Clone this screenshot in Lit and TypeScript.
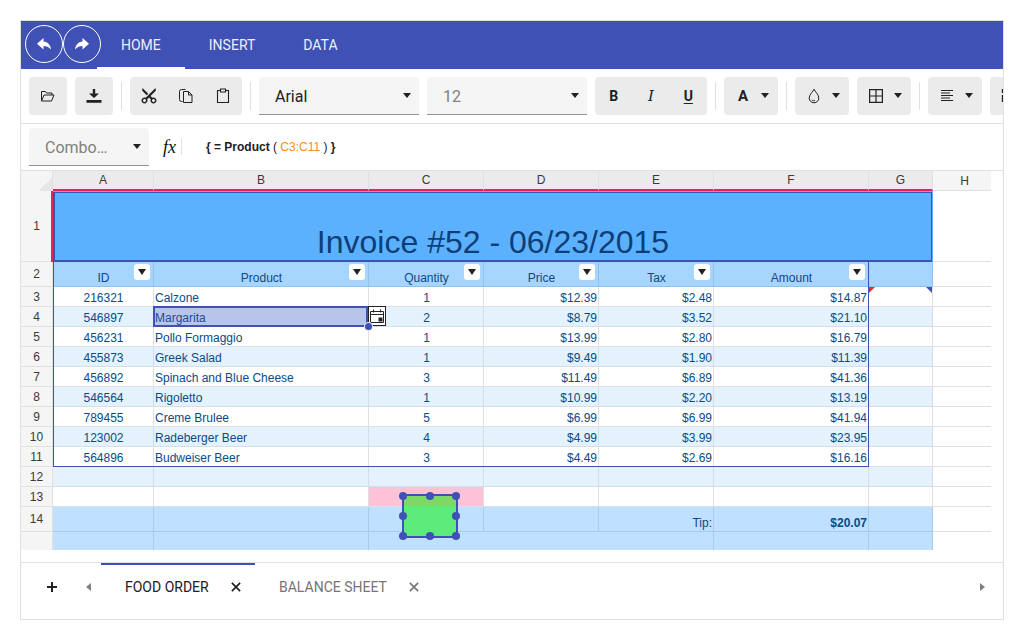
import { LitElement, html, css, svg } from 'lit';
import { customElement } from 'lit/decorators.js';

const icon = (body: unknown, size = 16, vb = 24) => html`<svg width=${size} height=${size} viewBox="0 0 ${vb} ${vb}">${body}</svg>`;

const ICONS = {
  undo: svg`<path fill="currentColor" d="M7.500 2 1 7.800l6.500 5.700V10c3 0 5.300 1 7.500 3.500C14.500 9 12 5.800 7.500 5.400z"/>`,
  redo: svg`<path fill="currentColor" d="M8.500 2 15 7.800l-6.500 5.700V10c-3 0-5.300 1-7.500 3.500C1.500 9 4 5.800 8.500 5.400z"/>`,
  open: svg`<path fill="none" stroke="currentColor" stroke-width="1" d="M1.500 13v-9.500h4l1 1.500h5.500v2M1.500 13h10l2.500-6H4z"/>`,
  save: svg`<path fill="currentColor" d="M6.800 1h2.400v4.500H13L8 10 3 5.500h3.800zM.5 12h15v2.700H.5z"/>`,
  cut: svg`<path transform="rotate(-90 12 12)" fill="currentColor" d="M9.640 7.640c.23-.5.36-1.050.36-1.640 0-2.210-1.790-4-4-4S2 3.790 2 6s1.790 4 4 4c.59 0 1.140-.13 1.640-.36L10 12l-2.360 2.360C7.140 14.130 6.590 14 6 14c-2.210 0-4 1.790-4 4s1.790 4 4 4 4-1.790 4-4c0-.59-.13-1.140-.36-1.640L12 14l7 7h3v-1L9.640 7.640zM6 8c-1.100 0-2-.89-2-2s.9-2 2-2 2 .89 2 2-.9 2-2 2zm0 12c-1.100 0-2-.89-2-2s.9-2 2-2 2 .89 2 2-.9 2-2 2zM19 3l-6 6 2 2 7-7V3z"/>`,
  copy: svg`<path fill="none" stroke="currentColor" stroke-width="1" d="M4.500 13.500h-1a2 2 0 0 1-2-2v-8a2 2 0 0 1 2-2h4M5.500 3.500h5l3.500 3.500v7.500H5.500zM10.500 3.500V7H14"/>`,
  paste: svg`<path fill="none" stroke="currentColor" stroke-width="1.100" d="M5.500 2.500H2.500v12h11v-12h-3M5.500 1h5v3h-5z"/>`,
  drop: svg`<path fill="none" stroke="currentColor" stroke-width="1" d="M8 1.200c-1 2.500-4.800 5.300-4.800 8.900a4.800 4.700 0 0 0 9.600 0c0-3.600-3.800-6.400-4.800-8.900zM5.800 11.800c.8 1 2.200 1.300 3.200.7"/>`,
  borders: svg`<path fill="none" stroke="currentColor" stroke-width="1.200" d="M1.600 1.600h12.800v12.800H1.600zM8 1.600v12.800M1.600 8h12.800"/>`,
  align: svg`<path fill="currentColor" d="M2 2h12v1H2zM2 4.500h9v1H2zM2 7h12v1H2zM2 9.500h9v1H2zM2 12h12v1H2z"/>`,
  merge: svg`<path fill="currentColor" d="M.8 1h1.400v4H.8zM.8 7h1.400v7H.8z"/>`,
  plus: svg`<path fill="currentColor" d="M7 3h2v4h4v2H9v4H7V9H3V7h4z"/>`,
  close: svg`<path fill="none" stroke="currentColor" stroke-width="2.200" d="M2.500 2.500l11 11M13.500 2.500l-11 11"/>`,
  calendar: svg`<path fill="none" stroke="#222" stroke-width="1" d="M1.500 3.500h13v11h-13zM1.500 6.500h13M4.500 1.500v3M11.500 1.500v3"/><path fill="#222" d="M9.500 9.500h4v4h-4z"/>`,
};

const COLS = ['A', 'B', 'C', 'D', 'E', 'F', 'G', 'H'];
const FILTERS = ['ID', 'Product', 'Quantity', 'Price', 'Tax', 'Amount'];
const ORDERS = [
  ['216321', 'Calzone', '1', '$12.39', '$2.48', '$14.87'],
  ['546897', 'Margarita', '2', '$8.79', '$3.52', '$21.10'],
  ['456231', 'Pollo Formaggio', '1', '$13.99', '$2.80', '$16.79'],
  ['455873', 'Greek Salad', '1', '$9.49', '$1.90', '$11.39'],
  ['456892', 'Spinach and Blue Cheese', '3', '$11.49', '$6.89', '$41.36'],
  ['546564', 'Rigoletto', '1', '$10.99', '$2.20', '$13.19'],
  ['789455', 'Creme Brulee', '5', '$6.99', '$6.99', '$41.94'],
  ['123002', 'Radeberger Beer', '4', '$4.99', '$3.99', '$23.95'],
  ['564896', 'Budweiser Beer', '3', '$4.49', '$2.69', '$16.16'],
];
const ALIGN = ['center', 'left', 'center', 'right', 'right', 'right'];

@customElement('app-root')
export class AppRoot extends LitElement {
  static styles = css`
    :host {
      display: block;
      padding: 20px;
      font-family: Roboto, "Liberation Sans", sans-serif;
    }
    .frame {
      display: flex;
      flex-direction: column;
      width: 984px;
      height: 600px;
      box-sizing: border-box;
      border: 1px solid #e0e0e0;
      overflow: hidden;
      background: #fff;
    }

    /* ribbon */
    .ribbon {
      display: flex;
      align-items: stretch;
      height: 48px;
      padding-left: 4px;
      flex: none;
      background: #3f51b5;
      color: #fff;
      font-size: 14px;
    }
    .round {
      width: 38px;
      height: 38px;
      margin-top: 4px;
      box-sizing: border-box;
      border: 1px solid #fff;
      border-radius: 50%;
      display: flex;
      align-items: center;
      justify-content: center;
    }
    .ribbon-tab {
      padding: 0 24px;
      display: flex;
      align-items: center;
      box-sizing: border-box;
      color: #eceefa;
    }
    .ribbon-tab.active { border-bottom: 2px solid #fff; padding-top: 2px; }
    .round + .ribbon-tab { margin-left: -4px; }

    /* toolbar */
    .toolbar {
      display: flex;
      align-items: center;
      gap: 8px;
      height: 55px;
      flex: none;
      box-sizing: border-box;
      padding: 0 0 1px 8px;
      border-bottom: 1px solid #e0e0e0;
      overflow: hidden;
      color: #212121;
    }
    .btn {
      flex: none;
      width: 38px;
      height: 38px;
      display: flex;
      align-items: center;
      justify-content: center;
      background: #ebebeb;
      border-radius: 4px;
    }
    .btn.split { width: 54px; gap: 10px; padding-left: 2px; box-sizing: border-box; }
    .group {
      flex: none;
      display: flex;
      width: 112px;
      height: 38px;
      background: #ebebeb;
      border-radius: 4px;
    }
    .group > * {
      flex: 1;
      display: flex;
      align-items: center;
      justify-content: center;
    }
    .sep { flex: none; width: 1px; height: 28px; background: #e0e0e0; }
    .combo {
      flex: none;
      width: 160px;
      height: 38px;
      box-sizing: border-box;
      display: flex;
      align-items: center;
      justify-content: space-between;
      padding: 0 8px 0 16px;
      background: #f5f5f5;
      border-bottom: 1px solid #949494;
      border-radius: 4px 4px 0 0;
      font-size: 16px;
      color: #212121;
    }
    .combo span { padding-top: 2px; }
    .combo.muted { color: #808080; }
    .caret {
      flex: none;
      width: 0;
      height: 0;
      border-left: 4px solid transparent;
      border-right: 4px solid transparent;
      border-top: 5px solid #212121;
    }
    .letter { font-size: 14px; font-weight: 700; }
    .letter.serif { font-family: "DejaVu Serif", serif; font-style: italic; font-weight: 400; font-size: 15px; }
    .letter.under { text-decoration: underline; text-underline-offset: 2px; }
    .letter.big { width: 16px; text-align: center; font-size: 15px; font-family: Roboto, sans-serif; }

    /* formula bar */
    .formula {
      display: flex;
      align-items: center;
      height: 47px;
      flex: none;
      box-sizing: border-box;
      padding: 0 0 1px 8px;
      border-bottom: 1px solid #e0e0e0;
    }
    .formula .combo { width: 120px; }
    .fx {
      width: 19px;
      box-sizing: border-box;
      margin-left: 14px;
      border-right: 1px solid #e0e0e0;
      font: italic 400 18px/16px "Liberation Serif", serif;
      color: #111;
    }
    .expr {
      margin-left: 24px;
      font: 700 12px "Liberation Sans", sans-serif;
      color: #212121;
      white-space: pre;
    }
    .expr span { font-weight: 400; }
    .expr .range-ref { color: #f58a2c; }

    /* sheet */
    .sheet {
      position: relative;
      display: grid;
      flex: none;
      width: 970px;
      height: 379px;
      grid-template-columns: 32px 101px 215px 115px 115px 115px 155px 64px 58px;
      grid-template-rows: 20px 71px 25px repeat(11, 20px) 25px 18px;
      font: 12px "Liberation Sans", sans-serif;
      color: #0d4a85;
    }
    .cell, .head, .rowh {
      box-sizing: border-box;
      border-right: 1px solid #e0e0e0;
      border-bottom: 1px solid #e0e0e0;
      display: flex;
      align-items: flex-end;
      padding: 0 2px 1px 1px;
      white-space: nowrap;
      min-width: 0;
      position: relative;
    }
    .head, .rowh {
      align-items: center;
      justify-content: center;
      color: #3a3a3a;
      padding: 0;
    }
    .head { background: #ebebeb; border-bottom: 2px solid #e91e63; }
    .head.plain {
      background: #f5f5f5;
      border-right: none;
      border-bottom: 1px solid #e0e0e0;
      padding-left: 5px;
    }
    .rowh { background: #f5f5f5; }
    .corner {
      background: linear-gradient(135deg, transparent 50%, #e6e6e6 50%) right bottom / 13px 13px no-repeat #f5f5f5;
      border-right: 1px solid #e0e0e0;
      box-sizing: border-box;
    }
    .left { justify-content: flex-start; }
    .center { justify-content: center; padding-left: 2px; padding-right: 1px; }
    .right { justify-content: flex-end; padding-right: 1px; }
    .h { border-right: none; }
    .alt { background: #e3f2fd; border-color: #d2dfea; }
    .alt.h, .blank.h { background: #fff; border-color: #e0e0e0; }
    .title {
      grid-column: span 7;
      background: #5cb1ff;
      justify-content: center;
      padding: 0 0 1px;
      font-size: 32px;
      color: #0c3f78;
      border: none;
    }
    .label {
      background: #a6d5ff;
      border-color: #8fc2ee;
      justify-content: center;
      padding: 0 1px 1px 2px;
    }
    .tip { background: #bfe0ff; border-color: #a8cbe9; }
    .bold { font-weight: 700; }
    .wide { grid-column: span 3; }
    .no-b { border-bottom: none; }
    .pink { background: #fcc3d8; }
    .picked { background: #b8c5ea; color: #1f4a94; }
    .filter {
      position: absolute;
      top: 2px;
      right: 3px;
      width: 16px;
      height: 16px;
      border-radius: 3px;
      background: #fff;
      display: flex;
      align-items: center;
      justify-content: center;
    }
    .filter .caret { border-left-width: 4.5px; border-right-width: 4.5px; border-top-width: 6px; }
    .sel-title, .sel-range, .sel-cell, .mark-rows, .cal-anchor, .note-anchor {
      position: absolute;
      pointer-events: none;
      box-sizing: border-box;
    }
    .sel-title {
      grid-area: 2 / 2 / 3 / 9;
      inset: 1px 1px 0 0;
      border: 1px solid #3f51b5;
      border-left-width: 2px;
      border-bottom-width: 2px;
    }
    .sel-range {
      grid-area: 3 / 2 / 13 / 8;
      inset: 0;
      border: 1px solid #3f51b5;
      border-top: none;
    }
    .sel-cell {
      grid-area: 5 / 3 / 6 / 4;
      inset: -1px 1px 0 -1px;
      border: 2px solid #3f51b5;
    }
    .mark-rows {
      grid-area: 2 / 1 / 3 / 2;
      inset: 0 0 0 auto;
      width: 2px;
      background: #e91e63;
    }
    .cal-anchor { grid-area: 5 / 4 / 6 / 5; inset: 0; }
    .handle {
      position: absolute;
      left: -4px;
      bottom: -3px;
      width: 7px;
      height: 7px;
      border-radius: 50%;
      background: #3f51b5;
      box-shadow: 0 0 0 1px #e3e6f5;
    }
    .cal {
      position: absolute;
      left: -1px;
      top: -1px;
      width: 18px;
      height: 20px;
      box-sizing: border-box;
      border: 1px solid #222;
      background: #fff;
      display: flex;
      align-items: center;
      justify-content: center;
    }
    .note-anchor { grid-area: 4 / 8 / 5 / 9; inset: 0; }
    .note-red, .note-blue { position: absolute; top: 0; width: 0; height: 0; }
    .note-red {
      left: 0;
      border-top: 6px solid #f02a1a;
      border-right: 6px solid transparent;
    }
    .note-blue {
      right: 1px;
      border-top: 6px solid #3f51b5;
      border-left: 6px solid transparent;
    }
    .shape {
      position: absolute;
      left: 381px;
      top: 323px;
      width: 56px;
      height: 44px;
      box-sizing: border-box;
      border: 2px solid #3f51b5;
      background: linear-gradient(#7cd966 0 10px, #5bec7c 10px);
    }
    .grip {
      position: absolute;
      width: 8px;
      height: 8px;
      border-radius: 50%;
      background: #3f51b5;
    }

    /* sheet tabs */
    .tabs {
      margin-top: 12px;
      flex: 1;
      display: flex;
      align-items: flex-start;
      border-top: 1px solid #e0e0e0;
      font-size: 14px;
      color: #212121;
    }
    .tab-icon {
      width: 16px;
      height: 16px;
      margin-top: 16px;
      flex: none;
      display: flex;
      align-items: center;
      justify-content: center;
    }
    .add { margin-left: 23px; }
    .back {
      margin: 20px 10px 0 26px;
      flex: none;
      width: 0;
      height: 0;
      border-top: 4px solid transparent;
      border-bottom: 4px solid transparent;
      border-right: 5px solid #808080;
    }
    .tab {
      display: flex;
      align-items: flex-start;
      height: 48px;
      box-sizing: border-box;
      padding: 12px 0 0 24px;
      gap: 19px;
      width: 154px;
      white-space: nowrap;
      line-height: 20px;
    }
    .tab .tab-icon { margin-top: 2px; }
    .tab.active { border-top: 2px solid #3f51b5; }
    .tab.idle { color: #757575; width: auto; padding-top: 14px; }
    .forward {
      margin: 20px 18px 0 auto;
      width: 0;
      height: 0;
      border-top: 4px solid transparent;
      border-bottom: 4px solid transparent;
      border-left: 5px solid #808080;
    }
  `;

  private combo(label: string, muted = false) {
    return html`<div class="combo ${muted ? 'muted' : ''}"><span>${label}</span><i class="caret"></i></div>`;
  }

  private split(content: unknown) {
    return html`<div class="btn split">${content}<i class="caret"></i></div>`;
  }

  private toolbar() {
    return html`<div class="toolbar">
      <div class="btn">${icon(ICONS.open, 16, 16)}</div>
      <div class="btn">${icon(ICONS.save, 16, 16)}</div>
      <i class="sep"></i>
      <div class="group">
        <span>${icon(ICONS.cut, 18)}</span>
        <span>${icon(ICONS.copy, 16, 16)}</span>
        <span>${icon(ICONS.paste, 16, 16)}</span>
      </div>
      <i class="sep"></i>
      ${this.combo('Arial')} ${this.combo('12', true)}
      <div class="group">
        <span class="letter">B</span>
        <span class="letter serif">I</span>
        <span class="letter under">U</span>
      </div>
      <i class="sep"></i>
      ${this.split(html`<span class="letter big">A</span>`)}
      <i class="sep"></i>
      ${this.split(icon(ICONS.drop, 16, 16))}
      ${this.split(icon(ICONS.borders, 16, 16))}
      <i class="sep"></i>
      ${this.split(icon(ICONS.align, 16, 16))}
      <div class="btn">${icon(ICONS.merge, 16, 16)}</div>
    </div>`;
  }

  private rows() {
    const filler = (n: number) =>
      html`<div class="rowh">${n}</div>
        ${COLS.map((_, i) => {
          const cls = n % 2 === 0 ? 'alt' : 'blank';
          const pink = n === 13 && i === 2 ? 'pink' : '';
          return html`<div class="cell ${cls} ${pink} ${i === 7 ? 'h' : ''}"></div>`;
        })}`;

    return html`
      <div class="corner"></div>
      ${COLS.map((c, i) => html`<div class="head ${i === 7 ? 'plain' : ''}">${c}</div>`)}

      <div class="rowh">1</div>
      <div class="cell title">Invoice #52 - 06/23/2015</div>
      <div class="cell h"></div>

      <div class="rowh">2</div>
      ${FILTERS.map(
        (f) => html`<div class="cell label">${f}
          <span class="filter"><i class="caret"></i></span></div>`,
      )}
      <div class="cell label"></div>
      <div class="cell h"></div>

      ${ORDERS.map(
        (row, r) => html`<div class="rowh">${r + 3}</div>
          ${row.map(
            (v, i) => html`<div class="cell ${ALIGN[i]} ${r % 2 ? 'alt' : ''} ${r === 1 && i === 1 ? 'picked' : ''}">${v}</div>`,
          )}
          <div class="cell ${r % 2 ? 'alt' : ''}"></div>
          <div class="cell h"></div>`,
      )}
      ${filler(12)} ${filler(13)}

      <div class="rowh">14</div>
      <div class="cell tip"></div>
      <div class="cell tip"></div>
      <div class="cell tip"></div>
      <div class="cell tip"></div>
      <div class="cell tip right">Tip:</div>
      <div class="cell tip right bold">$20.07</div>
      <div class="cell tip"></div>
      <div class="cell h"></div>

      <div class="rowh no-b"></div>
      <div class="cell tip no-b"></div>
      <div class="cell tip no-b"></div>
      <div class="cell tip no-b wide"></div>
      <div class="cell tip no-b"></div>
      <div class="cell tip no-b"></div>
      <div class="cell h no-b"></div>
    `;
  }

  private overlays() {
    const grips = [
      [-5, -4], [22, -4], [48, -4],
      [-5, 16], [48, 16],
      [-5, 36], [22, 36], [48, 36],
    ];
    return html`
      <div class="mark-rows"></div>
      <div class="sel-title"></div>
      <div class="sel-range"></div>
      <div class="sel-cell"></div>
      <div class="cal-anchor">
        <div class="cal">${icon(ICONS.calendar, 16, 16)}</div>
        <div class="handle"></div>
      </div>
      <div class="note-anchor"><i class="note-red"></i><i class="note-blue"></i></div>
      <div class="shape">
        ${grips.map(([x, y]) => html`<i class="grip" style="left:${x}px;top:${y}px"></i>`)}
      </div>
    `;
  }

  render() {
    return html`<div class="frame">
      <div class="ribbon">
        <div class="round">${icon(ICONS.undo, 16, 16)}</div>
        <div class="round">${icon(ICONS.redo, 16, 16)}</div>
        <div class="ribbon-tab active">HOME</div>
        <div class="ribbon-tab">INSERT</div>
        <div class="ribbon-tab">DATA</div>
      </div>
      ${this.toolbar()}
      <div class="formula">
        ${this.combo('Combo…', true)}
        <span class="fx">fx</span>
        <span class="expr">{ = Product <span>( </span><span class="range-ref">C3:C11</span><span> )</span> }</span>
      </div>
      <div class="sheet">${this.rows()} ${this.overlays()}</div>
      <div class="tabs">
        <span class="tab-icon add">${icon(ICONS.plus, 16, 16)}</span>
        <i class="back"></i>
        <div class="tab active">FOOD ORDER <span class="tab-icon">${icon(ICONS.close, 12, 16)}</span></div>
        <div class="tab idle">BALANCE SHEET <span class="tab-icon">${icon(ICONS.close, 12, 16)}</span></div>
        <i class="forward"></i>
      </div>
    </div>`;
  }
}
